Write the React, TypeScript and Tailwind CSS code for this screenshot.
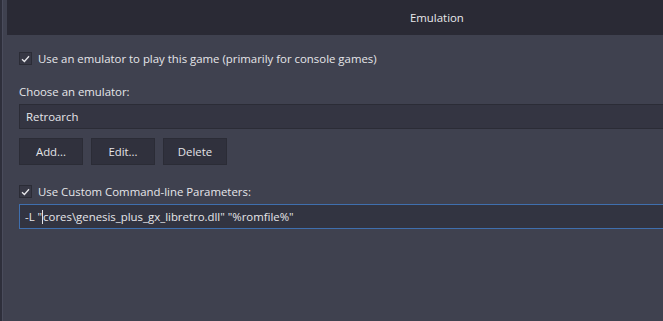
const Check = () => (
  <span className="flex h-[13px] w-[13px] items-center justify-center border border-[#2b2c36] bg-[#373845]">
    <svg width="9" height="8" viewBox="0 0 9 8" fill="none">
      <path d="M1 4.2 L3.4 6.5 L8 1.2" stroke="#e6e6ea" strokeWidth="1.3" />
    </svg>
  </span>
)

const Btn = ({ label }: { label: string }) => (
  <div className="flex h-[27px] w-[64px] items-center justify-center border border-[#2b2c36] bg-[#30313d] text-[#e4e4e8]">
    {label}
  </div>
)

export default function App() {
  return (
    <div
      className="flex h-[321px] w-[663px] overflow-hidden bg-[#3f414f] text-[11.4px] text-[#e6e6ea]"
      style={{ fontFamily: '"Open Sans", "Noto Sans", sans-serif' }}
    >
      <div className="w-[3px] shrink-0 border-r border-[#4a4c5c] bg-[#2e2f3b]" />
      <div className="flex min-w-0 flex-1 flex-col">
        <div className="ml-[4px] flex h-[35px] items-center bg-[#2a2a35] pl-[403px]">
          <span className="text-[#e8e8ec]">Emulation</span>
        </div>
        <div className="-mr-[12px] flex flex-col pl-[16px]">
          <label className="mt-[17px] flex h-[13px] items-center gap-[6px]">
            <Check />
            <span>Use an emulator to play this game (primarily for console games)</span>
          </label>
          <div className="mt-[19px] leading-[16px]">Choose an emulator:</div>
          <div className="mt-[4px] flex h-[25px] items-center border border-[#2b2c36] bg-[#343542] pl-[6px]">
            Retroarch
          </div>
          <div className="mt-[9px] flex gap-[8px]">
            <Btn label="Add..." />
            <Btn label="Edit..." />
            <Btn label="Delete" />
          </div>
          <label className="mt-[20px] flex h-[13px] items-center gap-[6px]">
            <Check />
            <span>Use Custom Command-line Parameters:</span>
          </label>
          <div className="mt-[6px] flex h-[25px] items-center border border-[#3f6fae] bg-[#323441] pl-[5px]">
            <span>-L "</span>
            <span className="h-[14px] w-px bg-[#e4e4e8]" />
            <span>cores\genesis_plus_gx_libretro.dll" "%romfile%"</span>
          </div>
        </div>
      </div>
    </div>
  )
}
